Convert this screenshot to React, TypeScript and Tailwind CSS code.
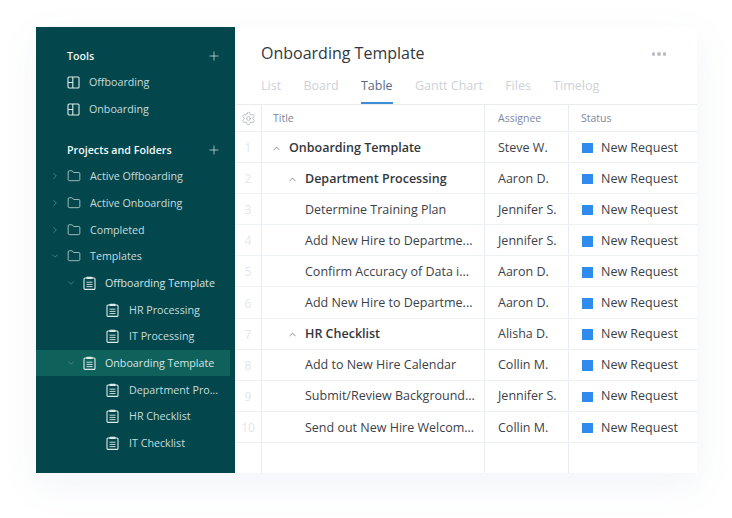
import { ChevronDown, ChevronRight, ChevronUp, Folder, Plus, Settings } from 'lucide-react';

const font = { fontFamily: '"Open Sans", sans-serif' };

function BoardIcon() {
  return (
    <svg width="13" height="13" viewBox="0 0 13 13" fill="none" stroke="#dcebea" strokeWidth="1.1">
      <rect x="1" y="1" width="11" height="11" rx="1" />
      <path d="M5.8 1v11M1 6.5h4.8" />
    </svg>
  );
}

function ClipboardIcon() {
  return (
    <svg width="13" height="14" viewBox="0 0 13 14" fill="none" stroke="#dcebea" strokeWidth="1.1">
      <rect x="1" y="2" width="11" height="11.4" rx="1" />
      <rect x="3.5" y="0.7" width="6" height="2.4" rx="0.5" fill="#dcebea" stroke="none" />
      <path d="M3.5 6.2h6M3.5 8.4h6M3.5 10.6h6" strokeWidth="0.9" />
    </svg>
  );
}

function SidebarHeading({ label, className }: { label: string; className?: string }) {
  return (
    <div className={`flex h-[26.67px] items-center justify-between pl-[31px] pr-[14px] ${className ?? ''}`}>
      <span className="text-[10.7px] font-semibold text-[#f2f8f8]">{label}</span>
      <Plus size={14} strokeWidth={1.1} className="text-[#eef6f6]" />
    </div>
  );
}

type TreeRow = {
  label: string;
  level: 1 | 2 | 3;
  open?: boolean;
  selected?: boolean;
};

const treeRows: TreeRow[] = [
  { label: 'Active Offboarding', level: 1, open: false },
  { label: 'Active Onboarding', level: 1, open: false },
  { label: 'Completed', level: 1, open: false },
  { label: 'Templates', level: 1, open: true },
  { label: 'Offboarding Template', level: 2, open: true },
  { label: 'HR Processing', level: 3 },
  { label: 'IT Processing', level: 3 },
  { label: 'Onboarding Template', level: 2, open: true, selected: true },
  { label: 'Department Pro...', level: 3 },
  { label: 'HR Checklist', level: 3 },
  { label: 'IT Checklist', level: 3 },
];

function SidebarTree({ row }: { row: TreeRow }) {
  const chevronClass = 'text-[#7fa5a6]';
  return (
    <div className={`flex h-[26.67px] w-[194px] items-center ${row.selected ? 'bg-[#0f615c]' : ''}`}>
      {row.level === 1 && (
        <>
          <span className="flex w-[31px] justify-end pr-[7px]">
            {row.open ? (
              <ChevronDown size={10} strokeWidth={1.3} className={chevronClass} />
            ) : (
              <ChevronRight size={10} strokeWidth={1.3} className={chevronClass} />
            )}
          </span>
          <Folder size={14} strokeWidth={1.2} className="text-[#dcebea]" />
          <span className="ml-[9px] text-[10.7px] text-[#c6dcdc]">{row.label}</span>
        </>
      )}
      {row.level === 2 && (
        <>
          <span className="flex w-[47px] justify-end pr-[7px]">
            <ChevronDown size={10} strokeWidth={1.3} className={chevronClass} />
          </span>
          <ClipboardIcon />
          <span className="ml-[9px] text-[10.7px] text-[#d3e5e5]">{row.label}</span>
        </>
      )}
      {row.level === 3 && (
        <>
          <span className="w-[70px]" />
          <ClipboardIcon />
          <span className="ml-[10px] text-[10.7px] text-[#c6dcdc]">{row.label}</span>
        </>
      )}
    </div>
  );
}

type TaskRow = {
  title: string;
  assignee: string;
  indent: 0 | 1 | 2;
  bold?: boolean;
};

const tasks: TaskRow[] = [
  { title: 'Onboarding Template', assignee: 'Steve W.', indent: 0, bold: true },
  { title: 'Department Processing', assignee: 'Aaron D.', indent: 1, bold: true },
  { title: 'Determine Training Plan', assignee: 'Jennifer S.', indent: 2 },
  { title: 'Add New Hire to Departme...', assignee: 'Jennifer S.', indent: 2 },
  { title: 'Confirm Accuracy of Data i...', assignee: 'Aaron D.', indent: 2 },
  { title: 'Add New Hire to Departme...', assignee: 'Aaron D.', indent: 2 },
  { title: 'HR Checklist', assignee: 'Alisha D.', indent: 1, bold: true },
  { title: 'Add to New Hire Calendar', assignee: 'Collin M.', indent: 2 },
  { title: 'Submit/Review Background...', assignee: 'Jennifer S.', indent: 2 },
  { title: 'Send out New Hire Welcom...', assignee: 'Collin M.', indent: 2 },
];

const tabs = ['List', 'Board', 'Table', 'Gantt Chart', 'Files', 'Timelog'];

export default function App() {
  return (
    <div className="h-[518px] w-[732px] overflow-hidden bg-white pl-[36px] pt-[27px]" style={font}>
      <div className="flex h-[446px] w-[661px] shadow-[0_12px_36px_rgba(90,120,170,0.08)]">
        <aside className="h-full w-[199px] shrink-0 bg-[#03474d] pt-[15.4px]">
          <SidebarHeading label="Tools" />
          {['Offboarding', 'Onboarding'].map((item) => (
            <div key={item} className="flex h-[26.67px] items-center pl-[31px]">
              <BoardIcon />
              <span className="ml-[9px] text-[10.7px] text-[#c6dcdc]">{item}</span>
            </div>
          ))}
          <SidebarHeading label="Projects and Folders" className="mt-[14px]" />
          {treeRows.map((row) => (
            <SidebarTree key={row.label} row={row} />
          ))}
        </aside>

        <main className="flex h-full w-[462px] flex-col bg-white">
          <div className="flex h-[78px] flex-col border-b border-[#e9edf1] pl-[26px]">
            <div className="flex items-center justify-between pr-[31px] pt-[13px]">
              <h1 className="text-[16px] leading-[26px] text-[#33373d]">Onboarding Template</h1>
              <div className="mt-[2px] flex gap-[2px]">
                <span className="h-[3.5px] w-[3.5px] rounded-full bg-[#b9bec6]" />
                <span className="h-[3.5px] w-[3.5px] rounded-full bg-[#b9bec6]" />
                <span className="h-[3.5px] w-[3.5px] rounded-full bg-[#b9bec6]" />
              </div>
            </div>
            <div className="mt-[5px] flex gap-[22.3px]">
              {tabs.map((tab) => (
                <div
                  key={tab}
                  className={`h-[33px] pt-[6px] text-[12.5px] leading-[17px] ${
                    tab === 'Table'
                      ? 'border-b-2 border-[#3f8fd8] text-[#5b6b8c]'
                      : 'text-[#cdd2d8]'
                  }`}
                >
                  {tab}
                </div>
              ))}
            </div>
          </div>

          <div className="grid h-[27px] grid-cols-[27px_223px_84px_128px] border-b border-[#eef1f4] text-[10.5px] text-[#7d86a0]">
            <div className="flex items-center justify-center border-r border-[#e9edf1]">
              <Settings size={15} strokeWidth={1.1} className="text-[#9aa0ab]" />
            </div>
            <div className="flex items-center border-r border-[#e9edf1] pl-[11px] pt-[1px]">Title</div>
            <div className="flex items-center border-r border-[#e9edf1] pl-[13px] pt-[1px]">Assignee</div>
            <div className="flex items-center pl-[12px] pt-[1px]">Status</div>
          </div>

          {tasks.map((task, i) => (
            <div
              key={i}
              className="grid h-[31.1px] grid-cols-[27px_223px_84px_128px] border-b border-[#eef1f4] text-[12.5px] text-[#3c4148]"
            >
              <div className="flex items-center justify-center border-r border-[#e9edf1] pt-[2px] text-[12px] text-[#e3e6ea]">
                {i + 1}
              </div>
              <div className="flex items-center border-r border-[#e9edf1] pt-[2px]">
                {task.indent === 0 && (
                  <span className="flex w-[27px] justify-center pl-[2px]">
                    <ChevronUp size={11} strokeWidth={1.4} className="text-[#4a4f57]" />
                  </span>
                )}
                {task.indent === 1 && (
                  <span className="flex w-[43px] justify-end pr-[7px]">
                    <ChevronUp size={11} strokeWidth={1.4} className="text-[#4a4f57]" />
                  </span>
                )}
                {task.indent === 2 && <span className="w-[43px]" />}
                <span className={task.bold ? 'font-semibold text-[#33373d]' : ''}>{task.title}</span>
              </div>
              <div className="flex items-center border-r border-[#e9edf1] pl-[13px] pt-[2px]">{task.assignee}</div>
              <div className="flex items-center pl-[13px] pt-[2px]">
                <span className="h-[10.5px] w-[10.5px] bg-[#2f8cec]" />
                <span className="ml-[8.5px]">New Request</span>
              </div>
            </div>
          ))}

          <div className="grid flex-1 grid-cols-[27px_223px_84px_128px]">
            <div className="border-r border-[#e9edf1]" />
            <div className="border-r border-[#e9edf1]" />
            <div className="border-r border-[#e9edf1]" />
            <div />
          </div>
        </main>
      </div>
    </div>
  );
}
